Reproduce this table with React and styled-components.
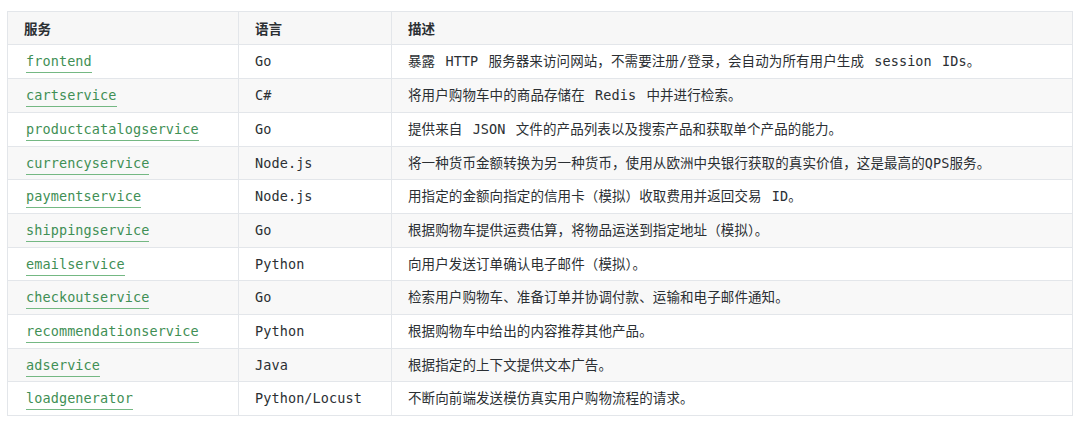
import React from "react";
import styled, { createGlobalStyle } from "styled-components";

const Global = createGlobalStyle`
  html, body { margin: 0; padding: 0; background: #ffffff; }
  body {
    font-family: "DejaVu Sans Mono", "Noto Sans CJK SC", monospace;
    color: #2b2f33;
  }
`;

const Page = styled.div`
  padding: 11px 8px 0 7px;
`;

const Table = styled.table`
  width: 1065px;
  border-collapse: collapse;
  table-layout: fixed;
  font-size: 13.5px;
  letter-spacing: 0.1px;
  border: 1px solid #e3e6ea;
`;

const Col = styled.col`
  width: ${(p) => p.$w}px;
`;

const HeadCell = styled.th`
  text-align: left;
  font-weight: 600;
  font-family: "Noto Sans CJK SC", sans-serif;
  font-size: 13.5px;
  letter-spacing: 0;
  background: #f7f7f7;
  border: 1px solid #e3e6ea;
  padding: 6px 16px;
  height: 20.4px;
  line-height: 20.4px;
  color: #2b2f33;
`;

const Row = styled.tr`
  background: ${(p) => (p.$striped ? "#f8f8f8" : "#ffffff")};
`;

const Cell = styled.td`
  border: 1px solid #e3e6ea;
  padding: 6px 16px;
  height: 20.7px;
  line-height: 20.7px;
  white-space: nowrap;
  color: #2b2f33;
  word-spacing: ${(p) => (p.$desc ? "2px" : "0")};
`;

const ServiceLink = styled.a`
  color: #3f8f55;
  text-decoration: none;
  border-bottom: 1px solid #74b883;
  padding-bottom: 3px;
  margin-left: 2px;
`;

const rows = [
  ["frontend", "Go", "暴露 HTTP 服务器来访问网站，不需要注册/登录，会自动为所有用户生成 session IDs。"],
  ["cartservice", "C#", "将用户购物车中的商品存储在 Redis 中并进行检索。"],
  ["productcatalogservice", "Go", "提供来自 JSON 文件的产品列表以及搜索产品和获取单个产品的能力。"],
  ["currencyservice", "Node.js", "将一种货币金额转换为另一种货币，使用从欧洲中央银行获取的真实价值，这是最高的QPS服务。"],
  ["paymentservice", "Node.js", "用指定的金额向指定的信用卡（模拟）收取费用并返回交易 ID。"],
  ["shippingservice", "Go", "根据购物车提供运费估算，将物品运送到指定地址（模拟）。"],
  ["emailservice", "Python", "向用户发送订单确认电子邮件（模拟）。"],
  ["checkoutservice", "Go", "检索用户购物车、准备订单并协调付款、运输和电子邮件通知。"],
  ["recommendationservice", "Python", "根据购物车中给出的内容推荐其他产品。"],
  ["adservice", "Java", "根据指定的上下文提供文本广告。"],
  ["loadgenerator", "Python/Locust", "不断向前端发送模仿真实用户购物流程的请求。"],
];

export default function App() {
  return (
    <Page>
      <Global />
      <Table>
        <colgroup>
          <Col $w={231} />
          <Col $w={153} />
          <Col $w={681} />
        </colgroup>
        <thead>
          <tr>
            <HeadCell>服务</HeadCell>
            <HeadCell>语言</HeadCell>
            <HeadCell>描述</HeadCell>
          </tr>
        </thead>
        <tbody>
          {rows.map(([name, lang, desc], i) => (
            <Row key={name} $striped={i % 2 === 1}>
              <Cell>
                <ServiceLink href="#">{name}</ServiceLink>
              </Cell>
              <Cell>{lang}</Cell>
              <Cell $desc>{desc}</Cell>
            </Row>
          ))}
        </tbody>
      </Table>
    </Page>
  );
}
